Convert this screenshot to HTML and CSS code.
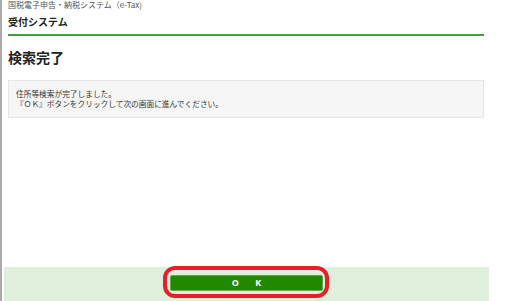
FILE: index.html
```html
<!DOCTYPE html>
<html lang="ja">
<head>
    <meta charset="UTF-8">
    <title>受付システム</title>
    <link rel="stylesheet" href="styles.css">
</head>
<body>
    <div class="page">
        <div class="content">
            <div class="system-name">国税電子申告・納税システム（e-Tax)</div>
            <div class="system-title">受付システム</div>
            <h1 class="heading">検索完了</h1>
            <div class="notice">
                <p>住所等検索が完了しました。</p>
                <p>『ＯＫ』ボタンをクリックして次の画面に進んでください。</p>
            </div>
        </div>

        <div class="footer">
            <button class="ok-button" type="button">O K
                <span class="highlight-ring"></span>
            </button>
        </div>
    </div>
</body>
</html>
```

FILE: styles.css
```css
body {
    margin: 0;
    padding: 0;
    background: #fff;
    font-family: "Noto Sans CJK JP", "Noto Sans", sans-serif;
    color: #333;
}

/* Contenedor principal */
.page {
    height: 301px;
    box-sizing: border-box;
    border-left: 2px solid #aaa;
    display: flex;
    flex-direction: column;
    overflow: hidden;
}

.content {
    width: 476px;
    margin-left: 6px;
}

.system-name {
    font-size: 8px;
    line-height: 10px;
    color: #555;
}

.system-title {
    font-size: 10px;
    font-weight: bold;
    line-height: 14px;
    color: #222;
    margin-top: 5px;
    padding-bottom: 5px;
    border-bottom: 2px solid #3aa33a;
}

.heading {
    font-size: 14px;
    line-height: 18px;
    color: #222;
    margin: 12px 0 14px;
}

/* Caja de mensaje */
.notice {
    background: #f6f6f6;
    border: 1px solid #e6e6e6;
    padding: 8px 7px 8px;
}

.notice p {
    margin: 0;
    font-size: 7.7px;
    line-height: 10px;
    color: #333;
}

/* Barra inferior */
.footer {
    margin-top: auto;
    margin-left: 2px;
    width: 485px;
    height: 34px;
    background: #e0efdc;
    display: flex;
    justify-content: center;
    align-items: flex-start;
    padding-top: 8px;
    box-sizing: border-box;
}

.ok-button {
    position: relative;
    width: 153px;
    height: 16px;
    background: #228800;
    border: 1px solid #5fa84a;
    border-radius: 2px;
    color: #fff;
    font-family: "Noto Sans", sans-serif;
    font-size: 9px;
    font-weight: bold;
    letter-spacing: 7px;
    padding: 0 0 0 7px;
    line-height: 14px;
}

/* Marca roja de la captura */
.highlight-ring {
    position: absolute;
    left: -8px;
    right: -7px;
    top: -10px;
    bottom: -8px;
    border: 4px solid #e5202a;
    border-radius: 12px;
}
```
